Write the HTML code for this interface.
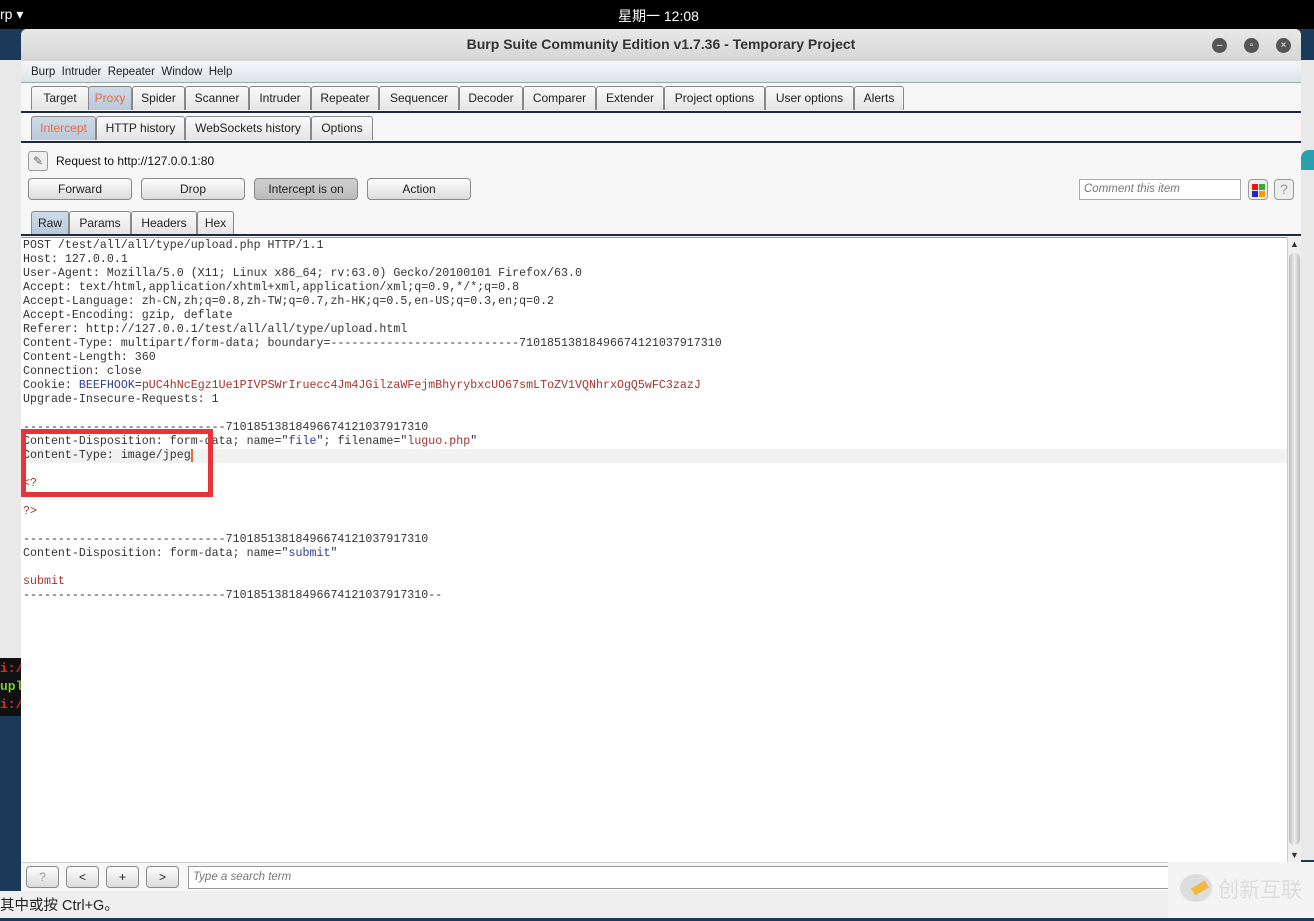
<!DOCTYPE html>
<html><head><meta charset="utf-8"><style>
*{margin:0;padding:0;box-sizing:border-box}
body{width:1314px;height:918px;overflow:hidden;background:#1b3a5a;font-family:"Liberation Sans","Noto Sans CJK SC",sans-serif;position:relative}
.abs{position:absolute}
.topbar{left:0;top:0;width:1314px;height:29px;background:#000;color:#fff;font-size:14px}
.win{left:21px;top:29px;width:1280px;height:862px;background:#f7f7f7;border-radius:6px 6px 0 0;overflow:hidden}
.title{left:0;top:0;width:1280px;height:32px;background:linear-gradient(#e8e8e8,#d6d6d6);text-align:center;font-size:14px;font-weight:bold;color:#333;line-height:31px}
.wbtn{width:15px;height:15px;border-radius:50%;background:#555;top:9px;color:#fff;font-size:10px;text-align:center;line-height:15px}
.menu{left:0;top:32px;width:1280px;height:22px;background:linear-gradient(#f4f6f9,#dfe3e8);font-size:11.5px;color:#222;line-height:22px;padding-left:10px;border-bottom:1px solid #9aa}
.tabs{font-size:12px;color:#222}
.tab{position:absolute;height:24px;border:1px solid #888;border-bottom:none;border-radius:3px 3px 0 0;background:linear-gradient(#fafafa,#e4e4e4);text-align:center;line-height:23px}
.sel{color:#e86a3c;background:linear-gradient(#cfdbe8,#b9c9da)}
.line{position:absolute;left:0;width:1280px;height:2px;background:#1c2a3c}
.btn{position:absolute;height:22px;border:1px solid #888;border-radius:4px;background:linear-gradient(#fdfdfd,#dcdcdc);font-size:12px;text-align:center;line-height:20px;color:#222}
.ed{left:0;top:208px;width:1266px;height:625px;background:#fff;border-top:1px solid #999}
pre{font-family:"Liberation Mono",monospace;font-size:11.6px;line-height:14px;color:#333;position:absolute;left:2px;top:1px;letter-spacing:0.03px}
.b{color:#2d3f9a}.r{color:#a8322f}
</style></head><body>
<div class="abs topbar"><span class="abs" style="left:0;top:6px">rp ▾</span><span class="abs" style="left:618px;top:6px">星期一 12:08</span></div>
<div class="abs" style="left:0;top:60px;width:21px;height:600px;background:#e9e9e9"></div>
<div class="abs" style="left:0;top:658px;width:21px;height:58px;background:#111;font-family:'Liberation Mono',monospace;font-size:13px;font-weight:bold;line-height:18px;padding-top:2px"><span style="color:#e22">i:/</span><br><span style="color:#7c3">upl</span><br><span style="color:#e22">i:/</span></div>
<div class="abs" style="left:1301px;top:60px;width:13px;height:800px;background:#e9e9e9"></div>
<div class="abs" style="left:1301px;top:150px;width:13px;height:20px;background:#2aa0b0;border-radius:8px 0 0 0"></div>
<div class="abs" style="left:0;top:891px;width:1314px;height:27px;background:#efefef;font-size:14.5px;color:#222;line-height:30px">其中或按 Ctrl+G。</div>

<div class="abs win">
 <div class="abs title">Burp Suite Community Edition v1.7.36 - Temporary Project</div>
 <div class="abs wbtn" style="left:1191px">–</div>
 <div class="abs wbtn" style="left:1223px">▫</div>
 <div class="abs wbtn" style="left:1255px">×</div>
 <div class="abs menu">Burp&nbsp; Intruder&nbsp; Repeater&nbsp; Window&nbsp; Help</div>
 <div class="abs tabs" style="left:0;top:55px;width:1280px;height:28px;background:#f7f7f7">
  <div class="tab" style="left:10px;width:58px;top:2px">Target</div>
  <div class="tab sel" style="left:67px;width:44px;top:2px">Proxy</div>
  <div class="tab" style="left:111px;width:53px;top:2px">Spider</div>
  <div class="tab" style="left:164px;width:64px;top:2px">Scanner</div>
  <div class="tab" style="left:228px;width:62px;top:2px">Intruder</div>
  <div class="tab" style="left:290px;width:68px;top:2px">Repeater</div>
  <div class="tab" style="left:358px;width:80px;top:2px">Sequencer</div>
  <div class="tab" style="left:438px;width:64px;top:2px">Decoder</div>
  <div class="tab" style="left:502px;width:73px;top:2px">Comparer</div>
  <div class="tab" style="left:575px;width:68px;top:2px">Extender</div>
  <div class="tab" style="left:643px;width:101px;top:2px">Project options</div>
  <div class="tab" style="left:744px;width:89px;top:2px">User options</div>
  <div class="tab" style="left:833px;width:50px;top:2px">Alerts</div>
 </div>
 <div class="line" style="top:82px"></div>
 <div class="abs tabs" style="left:0;top:84px;width:1280px;height:28px">
  <div class="tab sel" style="left:10px;width:65px;top:3px">Intercept</div>
  <div class="tab" style="left:75px;width:89px;top:3px">HTTP history</div>
  <div class="tab" style="left:164px;width:126px;top:3px">WebSockets history</div>
  <div class="tab" style="left:290px;width:62px;top:3px">Options</div>
 </div>
 <div class="line" style="top:112px"></div>
 <div class="abs" style="left:7px;top:122px;width:20px;height:20px;border:1px solid #999;border-radius:3px;background:#eee;font-size:12px;text-align:center;line-height:18px;color:#666">✎</div>
 <div class="abs" style="left:35px;top:125px;font-size:12px;color:#111">Request to http://127.0.0.1:80</div>
 <div class="btn" style="left:7px;top:149px;width:104px">Forward</div>
 <div class="btn" style="left:120px;top:149px;width:104px">Drop</div>
 <div class="btn" style="left:233px;top:149px;width:104px;background:linear-gradient(#d0d0d0,#bcbcbc)">Intercept is on</div>
 <div class="btn" style="left:346px;top:149px;width:104px">Action</div>
 <div class="abs" style="left:1058px;top:150px;width:162px;height:21px;border:1px solid #aaa;background:#fff;font-size:11.5px;font-style:italic;color:#777;padding:3px 4px">Comment this item</div>
 <div class="abs" style="left:1227px;top:150px;width:20px;height:21px;border:1px solid #999;border-radius:4px;background:#eee;padding:4px 3px"><div style="display:grid;grid-template-columns:6px 6px;gap:1px"><i style="height:6px;background:#e11"></i><i style="height:6px;background:#3a3"></i><i style="height:6px;background:#22c"></i><i style="height:6px;background:#f90"></i></div></div>
 <div class="abs" style="left:1253px;top:150px;width:20px;height:21px;border:1px solid #999;border-radius:4px;background:#eee;font-size:14px;color:#999;text-align:center;line-height:19px">?</div>
 <div class="abs tabs" style="left:0;top:180px;width:1280px;height:26px">
  <div class="tab sel" style="left:10px;width:38px;top:2px;color:#222">Raw</div>
  <div class="tab" style="left:48px;width:62px;top:2px">Params</div>
  <div class="tab" style="left:110px;width:66px;top:2px">Headers</div>
  <div class="tab" style="left:176px;width:37px;top:2px">Hex</div>
 </div>
 <div class="line" style="top:205px"></div>
 <div class="abs ed">
  <div class="abs" style="left:0;top:211px;width:1266px;height:14px;background:#f2f2f2"></div>
<pre>POST /test/all/all/type/upload.php HTTP/1.1
Host: 127.0.0.1
User-Agent: Mozilla/5.0 (X11; Linux x86_64; rv:63.0) Gecko/20100101 Firefox/63.0
Accept: text/html,application/xhtml+xml,application/xml;q=0.9,*/*;q=0.8
Accept-Language: zh-CN,zh;q=0.8,zh-TW;q=0.7,zh-HK;q=0.5,en-US;q=0.3,en;q=0.2
Accept-Encoding: gzip, deflate
Referer: http://127.0.0.1/test/all/all/type/upload.html
Content-Type: multipart/form-data; boundary=---------------------------71018513818496674121037917310
Content-Length: 360
Connection: close
Cookie: <span class="b">BEEFHOOK</span>=<span class="r">pUC4hNcEgz1Ue1PIVPSWrIruecc4Jm4JGilzaWFejmBhyrybxcUO67smLToZV1VQNhrxOgQ5wFC3zazJ</span>
Upgrade-Insecure-Requests: 1

-----------------------------71018513818496674121037917310
Content-Disposition: form-data; name="<span class="b">file</span>"; filename="<span class="r">luguo.php</span>"
Content-Type: image/jpeg<span style="border-right:2px solid #e86a3c"></span>

<span class="r">&lt;?</span>
<span class="r">  </span>
<span class="r">?&gt;</span>

-----------------------------71018513818496674121037917310
Content-Disposition: form-data; name="<span class="b">submit</span>"

<span class="r">submit</span>
-----------------------------71018513818496674121037917310--</pre>
  <div class="abs" style="left:0;top:191px;width:192px;height:68px;border:5px solid #e8333a"></div>
 </div>
 <div class="abs" style="left:1266px;top:208px;width:14px;height:625px;background:#eee;border-left:1px solid #ccc">
  <div style="position:absolute;top:2px;left:2px;font-size:9px;color:#333">▲</div>
  <div style="position:absolute;top:16px;left:1px;width:11px;height:592px;background:linear-gradient(90deg,#bbb,#eee,#bbb);border-radius:5px"></div>
  <div style="position:absolute;bottom:2px;left:2px;font-size:9px;color:#333">▼</div>
 </div>
 <div class="abs" style="left:0;top:833px;width:1280px;height:29px;background:#f7f7f7;border-top:1px solid #ccc">
  <div class="btn" style="left:5px;top:3px;width:33px;color:#999">?</div>
  <div class="btn" style="left:45px;top:3px;width:33px">&lt;</div>
  <div class="btn" style="left:85px;top:3px;width:33px">+</div>
  <div class="btn" style="left:125px;top:3px;width:33px">&gt;</div>
  <div class="abs" style="left:167px;top:3px;width:1000px;height:23px;border:1px solid #999;background:#fff;font-size:11.5px;font-style:italic;color:#777;padding:4px 4px">Type a search term</div>
 </div>
</div>
<div class="abs" style="left:1168px;top:862px;width:146px;height:56px;background:#f4f4f4"></div>
<div class="abs" style="left:1180px;top:874px;width:32px;height:28px;border-radius:50%;background:#ddd"></div>
<div class="abs" style="left:1192px;top:884px;width:16px;height:8px;background:#f0b840;transform:rotate(-30deg)"></div>
<div class="abs" style="left:1218px;top:874px;font-size:21px;color:#ddd">创新互联</div>
</body></html>
